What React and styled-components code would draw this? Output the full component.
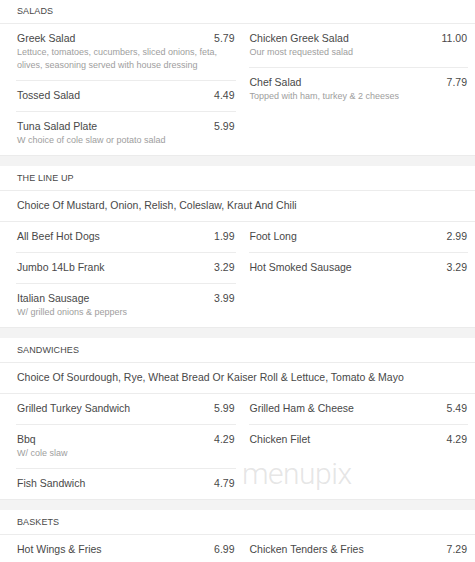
import React from 'react'
import styled, { createGlobalStyle } from 'styled-components'

const sections = [
  {
    title: 'Salads',
    columns: [
      [
        {
          name: 'Greek Salad',
          price: '5.79',
          desc: 'Lettuce, tomatoes, cucumbers, sliced onions, feta, olives, seasoning served with house dressing'
        },
        { name: 'Tossed Salad', price: '4.49' },
        {
          name: 'Tuna Salad Plate',
          price: '5.99',
          desc: 'W choice of cole slaw or potato salad'
        }
      ],
      [
        {
          name: 'Chicken Greek Salad',
          price: '11.00',
          desc: 'Our most requested salad'
        },
        {
          name: 'Chef Salad',
          price: '7.79',
          desc: 'Topped with ham, turkey & 2 cheeses'
        }
      ]
    ]
  },
  {
    title: 'The Line Up',
    note: 'Choice Of Mustard, Onion, Relish, Coleslaw, Kraut And Chili',
    columns: [
      [
        { name: 'All Beef Hot Dogs', price: '1.99' },
        { name: 'Jumbo 14Lb Frank', price: '3.29' },
        {
          name: 'Italian Sausage',
          price: '3.99',
          desc: 'W/ grilled onions & peppers'
        }
      ],
      [
        { name: 'Foot Long', price: '2.99' },
        { name: 'Hot Smoked Sausage', price: '3.29' }
      ]
    ]
  },
  {
    title: 'Sandwiches',
    note: 'Choice Of Sourdough, Rye, Wheat Bread Or Kaiser Roll & Lettuce, Tomato & Mayo',
    watermark: true,
    columns: [
      [
        { name: 'Grilled Turkey Sandwich', price: '5.99' },
        { name: 'Bbq', price: '4.29', desc: 'W/ cole slaw' },
        { name: 'Fish Sandwich', price: '4.79' }
      ],
      [
        { name: 'Grilled Ham & Cheese', price: '5.49' },
        { name: 'Chicken Filet', price: '4.29' }
      ]
    ]
  },
  {
    title: 'Baskets',
    columns: [
      [{ name: 'Hot Wings & Fries', price: '6.99' }],
      [{ name: 'Chicken Tenders & Fries', price: '7.29' }]
    ]
  }
]

const GlobalStyle = createGlobalStyle`
  body {
    margin: 0;
    background: #f3f3f3;
    font-family: 'Liberation Sans', Arial, sans-serif;
    color: #444;
  }
`

const Page = styled.div`
  margin-top: -1px;
  height: 563px;
  overflow: hidden;
`

const Section = styled.section`
  position: relative;
  background: #fff;
  border-bottom: 1px solid #ebebeb;
  margin-bottom: 10px;
`

const Header = styled.h2`
  margin: 0;
  padding: 6px 17px 5px;
  font-size: 9px;
  line-height: 13px;
  font-weight: 400;
  text-transform: uppercase;
  letter-spacing: 0.1px;
  color: #484848;
  border-bottom: 1px solid #ececec;
`

const Note = styled.div`
  padding: 7px 17px 8px;
  font-size: 10.5px;
  line-height: 15px;
  color: #484848;
  border-bottom: 1px solid #ececec;
`

const Columns = styled.div`
  display: grid;
  grid-template-columns: 1fr 1fr;
  column-gap: 13px;
  padding: 0 7px 0 16px;
`

const Column = styled.div`
  display: flex;
  flex-direction: column;
`

const Item = styled.div`
  padding: 7px 1px 8px;
  border-bottom: 1px solid #ececec;

  &:last-child {
    border-bottom: none;
  }
`

const ItemTop = styled.div`
  display: flex;
  justify-content: space-between;
  font-size: 10.5px;
  line-height: 15px;
  color: #484848;
`

const Desc = styled.div`
  font-size: 9px;
  line-height: 13px;
  color: #9e9e9e;
`

const Watermark = styled.div`
  position: absolute;
  left: 242px;
  top: 118px;
  font-family: Roboto, 'Liberation Sans', sans-serif;
  font-weight: 300;
  font-size: 30px;
  letter-spacing: -0.5px;
  color: rgba(190, 190, 190, 0.4);
  pointer-events: none;
`

function MenuItem({ item }) {
  return (
    <Item>
      <ItemTop>
        <span>{item.name}</span>
        <span>{item.price}</span>
      </ItemTop>
      {item.desc && <Desc>{item.desc}</Desc>}
    </Item>
  )
}

export default function App() {
  return (
    <>
      <GlobalStyle />
      <Page>
        {sections.map(section => (
          <Section key={section.title}>
            <Header>{section.title}</Header>
            {section.note && <Note>{section.note}</Note>}
            <Columns>
              {section.columns.map((col, i) => (
                <Column key={i}>
                  {col.map(item => (
                    <MenuItem key={item.name} item={item} />
                  ))}
                </Column>
              ))}
            </Columns>
            {section.watermark && <Watermark>menupix</Watermark>}
          </Section>
        ))}
      </Page>
    </>
  )
}
